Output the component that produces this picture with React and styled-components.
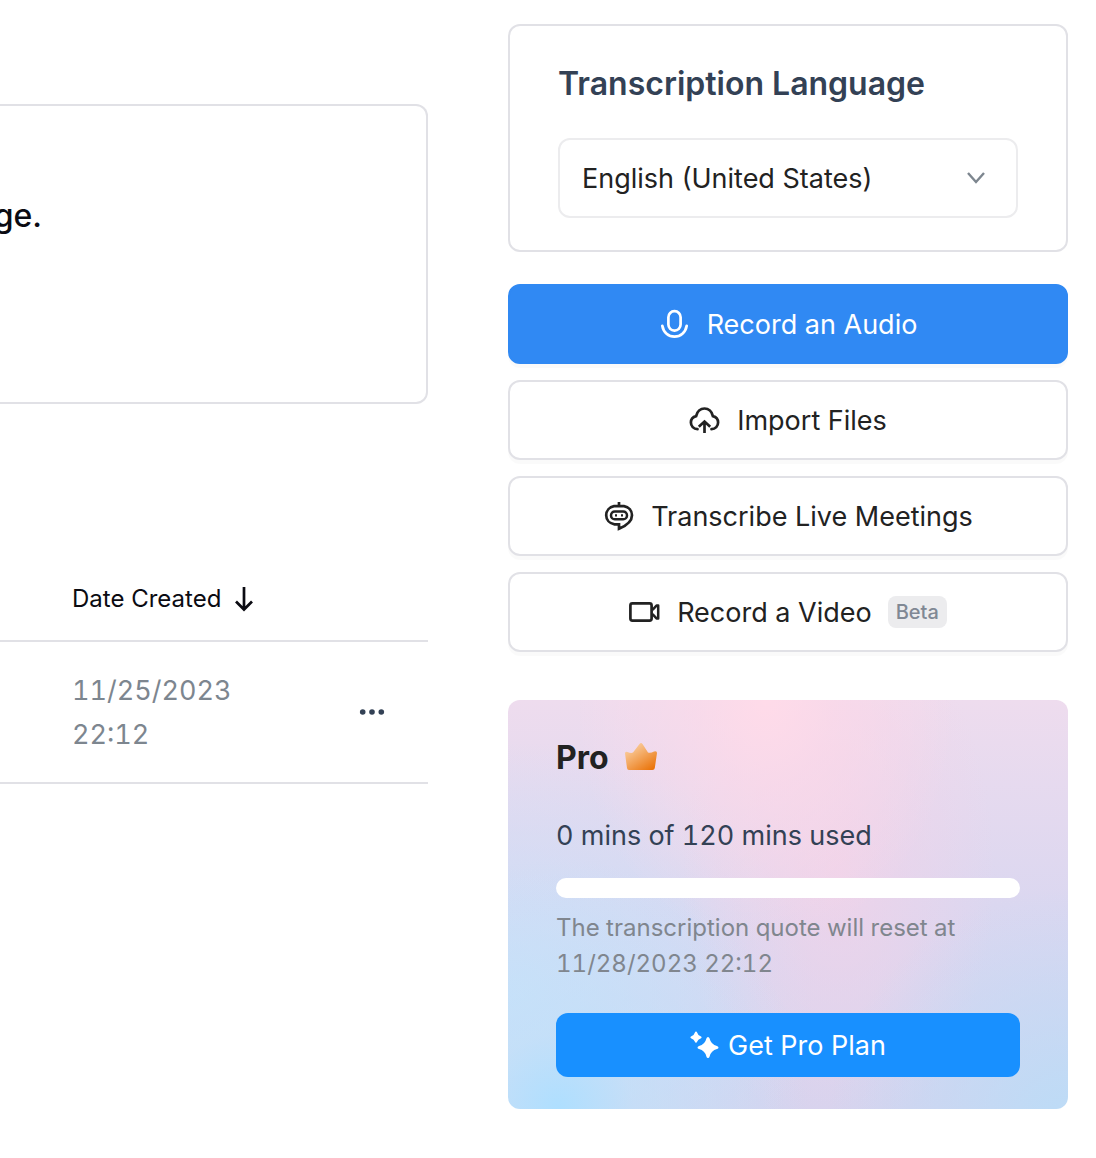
import React from "react";
import styled, { createGlobalStyle } from "styled-components";

const GlobalStyle = createGlobalStyle`
  * {
    box-sizing: border-box;
  }
  body {
    margin: 0;
    background: #ffffff;
    color: #222222;
    font-family: Inter, "Liberation Sans", sans-serif;
    font-size: 27px;
    overflow-x: hidden;
  }
  h2, p {
    margin: 0;
  }
  button, select {
    font-family: inherit;
  }
`;

const Page = styled.div`
  display: grid;
  grid-template-columns: minmax(0, 1fr) 560px;
  column-gap: 80px;
  padding: 24px 28px 48px 0;
`;

const Main = styled.main`
  padding-top: 80px;
`;

const Notice = styled.section`
  height: 300px;
  padding-top: 90px;
  border: 2px solid #e1e1e6;
  border-left: 0;
  border-radius: 0 12px 12px 0;
  overflow: hidden;
`;

const NoticeText = styled.p`
  display: flex;
  justify-content: flex-end;
  width: 42px;
  font-size: 32px;
  font-weight: 500;
  line-height: 40px;
  color: #0b0b12;
`;

const FileTable = styled.table`
  width: 100%;
  margin-top: 151px;
  border-collapse: collapse;
  text-align: left;
`;

const HeadCell = styled.th`
  height: 86px;
  padding: 2px 0 0 72px;
  border-bottom: 2px solid #e1e1e6;
  font-weight: 400;
`;

const SortButton = styled.button`
  display: flex;
  align-items: center;
  gap: 12px;
  padding: 0;
  border: 0;
  background: none;
  font-size: 24px;
  line-height: 32px;
  color: #0b0b12;
`;

const Cell = styled.td`
  height: 142px;
  padding: ${(props) => (props.$end ? "0 40px 0 0" : "2px 0 0 72px")};
  border-bottom: 2px solid #e1e1e6;
  line-height: 44px;
  font-variant-numeric: tabular-nums;
  color: #7d868f;
`;

const MoreButton = styled.button`
  display: flex;
  margin-left: auto;
  padding: 0;
  border: 0;
  background: none;
  color: #334155;
`;

const Sidebar = styled.aside`
  display: flex;
  flex-direction: column;
`;

const LanguageCard = styled.section`
  padding: 36px 48px 32px;
  border: 2px solid #e1e1e6;
  border-radius: 12px;
`;

const LanguageLabel = styled.label`
  display: block;
  margin-bottom: 32px;
  font-size: 32px;
  font-weight: 600;
  line-height: 44px;
  color: #334155;
`;

const SelectBox = styled.div`
  position: relative;
  height: 80px;

  svg {
    position: absolute;
    top: 30px;
    right: 32px;
    pointer-events: none;
  }
`;

const LanguageSelect = styled.select`
  width: 100%;
  height: 100%;
  padding: 0 64px 0 22px;
  appearance: none;
  border: 2px solid #ececee;
  border-radius: 12px;
  background: #ffffff;
  color: #222222;
  font-size: 27px;
`;

const Actions = styled.div`
  display: flex;
  flex-direction: column;
  gap: 16px;
  margin: 32px 0 48px;
`;

const ActionButton = styled.button`
  display: flex;
  align-items: center;
  justify-content: center;
  gap: 16px;
  height: 80px;
  border: 2px solid ${(props) => (props.$primary ? "#3089f3" : "#e1e1e6")};
  border-radius: 12px;
  background: ${(props) => (props.$primary ? "#3089f3" : "#ffffff")};
  color: ${(props) => (props.$primary ? "#ffffff" : "#222222")};
  box-shadow: 0 4px 0 rgba(0, 0, 0, 0.02);
  font-size: 27px;
`;

const Beta = styled.span`
  padding: 0 8px;
  border-radius: 8px;
  background: #ececee;
  color: #808894;
  font-size: 20px;
  font-weight: 500;
  line-height: 32px;
`;

const PlanCard = styled.section`
  padding: 36px 48px 32px;
  border-radius: 12px;
  background:
    radial-gradient(circle 250px at 9% 100%, #aedfff 0, rgba(190, 225, 250, 0.6) 30%, rgba(205, 222, 248, 0) 100%),
    radial-gradient(circle 240px at 100% 105%, #bbdcf7 0, rgba(196, 216, 244, 0) 100%),
    radial-gradient(ellipse 34% 60% at 46% 0, #ffdbe9 0, rgba(255, 217, 232, 0.6) 35%, rgba(255, 215, 232, 0) 100%),
    radial-gradient(ellipse 28% 66% at 59% 42%, rgba(242, 210, 232, 0.8) 0, rgba(234, 208, 230, 0) 100%),
    radial-gradient(ellipse 55% 62% at 0 72%, #cce0f8 0, rgba(214, 222, 246, 0) 100%),
    linear-gradient(180deg, #eedcee 0, #dbd7f0 50%, #d6d3ee 100%);
`;

const PlanTitle = styled.h2`
  display: flex;
  align-items: center;
  gap: 16px;
  font-size: 32px;
  font-weight: 700;
  line-height: 44px;
`;

const Usage = styled.label`
  display: block;
  margin: 34px 0 20px;
  line-height: 44px;
  font-variant-numeric: tabular-nums;
  color: #334155;
`;

const UsageBar = styled.progress`
  display: block;
  width: 100%;
  height: 20px;
  appearance: none;
  border: 0;
  border-radius: 10px;
  background: #ffffff;
  overflow: hidden;

  &::-webkit-progress-bar {
    background: #ffffff;
  }
  &::-webkit-progress-value {
    background: #1890ff;
  }
`;

const ResetNote = styled.p`
  margin: 12px 0 31px;
  font-size: 24px;
  line-height: 36px;
  font-variant-numeric: tabular-nums;
  color: #80868e;
`;

const UpgradeButton = styled.button`
  display: flex;
  align-items: center;
  justify-content: center;
  gap: 8px;
  width: 100%;
  height: 64px;
  border: 0;
  border-radius: 12px;
  background: #1890ff;
  color: #ffffff;
  font-size: 27px;
`;

const Icon = ({ width = 32, height = 32, children }) => (
  <svg
    width={width}
    height={height}
    viewBox={`0 0 ${width} ${height}`}
    fill="none"
    stroke="currentColor"
    strokeWidth="2.7"
    aria-hidden="true"
  >
    {children}
  </svg>
);

const MicIcon = () => (
  <Icon>
    <rect x="9.4" y="3.2" width="12.2" height="19.4" rx="6" />
    <path d="M3.3 17.8C4.4 24.5 9.500 28.600 15.500 28.600S26.600 24.500 27.700 17.800" strokeLinecap="round" />
  </Icon>
);

const CloudIcon = () => (
  <Icon>
    <path
      d="M8.500 25.200C4.500 25.200 1.900 22 1.900 18.600C1.900 15.300 4.100 12.800 7.100 12.100C8.100 7.600 11.500 4.500 15.500 4.500S22.900 7.600 23.900 12.100C26.900 12.800 29.100 15.300 29.100 18.600C29.100 22 26.500 25.200 22.500 25.200"
      strokeLinecap="round"
    />
    <path d="M15.500 29V18M9.800 22.800L15.500 17.500L21.200 22.800" />
  </Icon>
);

const BotIcon = () => (
  <Icon>
    <path d="M16 2V6M11 6.200H21C25.500 7 29 10.500 29 15.200C29 22 22.500 26 16 28.800V24.300H11.500C6.500 23.500 3.200 19.800 3.200 15.200S6.500 7 11 6.200Z" />
    <rect x="8" y="11.600" width="16" height="7.600" rx="3.800" strokeWidth="2.500" />
    <path d="M12 15.400H14M18 15.400H20" strokeWidth="2.200" />
  </Icon>
);

const VideoIcon = () => (
  <Icon>
    <rect x="1.400" y="7.400" width="21.200" height="17.200" rx="2" />
    <path
      d="M23.500 13.800L27.500 9.600H29.200V22.400H27.500L23.500 18.200"
      strokeWidth="2.500"
      strokeLinejoin="round"
    />
  </Icon>
);

const actions = [
  { label: "Record an Audio", icon: MicIcon, primary: true },
  { label: "Import Files", icon: CloudIcon },
  { label: "Transcribe Live Meetings", icon: BotIcon },
  { label: "Record a Video", icon: VideoIcon, beta: true },
];

const App = () => {
  return (
    <>
      <GlobalStyle />
      <Page>
        <Main>
          <Notice>
            <NoticeText>ge.</NoticeText>
          </Notice>
          <FileTable>
            <thead>
              <tr>
                <HeadCell colSpan={2}>
                  <SortButton>
                    Date Created
                    <Icon width={20} height={26}>
                      <path d="M11 1V23M3 15.500L11 23.500L19 15.500" />
                    </Icon>
                  </SortButton>
                </HeadCell>
              </tr>
            </thead>
            <tbody>
              <tr>
                <Cell>
                  11/25/2023
                  <br />
                  22:12
                </Cell>
                <Cell $end>
                  <MoreButton aria-label="More">
                    <Icon width={32} height={8}>
                      <g fill="currentColor" stroke="none">
                        <circle cx="6.700" cy="4" r="2.800" />
                        <circle cx="16" cy="4" r="2.800" />
                        <circle cx="25.300" cy="4" r="2.800" />
                      </g>
                    </Icon>
                  </MoreButton>
                </Cell>
              </tr>
            </tbody>
          </FileTable>
        </Main>
        <Sidebar>
          <LanguageCard>
            <LanguageLabel htmlFor="language">
              Transcription Language
            </LanguageLabel>
            <SelectBox>
              <LanguageSelect id="language">
                <option>English (United States)</option>
              </LanguageSelect>
              <Icon width={20} height={20}>
                <path d="M2 5L10 14L18 5" stroke="#7d868f" strokeWidth="2.400" />
              </Icon>
            </SelectBox>
          </LanguageCard>
          <Actions>
            {actions.map((action) => {
              return (
                <ActionButton key={action.label} $primary={action.primary}>
                  <action.icon />
                  {action.label}
                  {action.beta && <Beta>Beta</Beta>}
                </ActionButton>
              );
            })}
          </Actions>
          <PlanCard>
            <PlanTitle>
              Pro
              <svg width="34" height="32" viewBox="1 1 34 32" aria-hidden="true">
                <defs>
                  <linearGradient id="crown" x1="0.1" y1="0.1" x2="0.8" y2="1">
                    <stop offset="0" stopColor="#fbd3a8" />
                    <stop offset="1" stopColor="#ea750c" />
                  </linearGradient>
                </defs>
                <path
                  d="M1 12.500Q1 10 3.500 11Q7 12.500 9 11.500L15.500 3Q17 1 18.500 3L24 11.500Q26.500 12.500 30 10.500Q33 9.500 33 12L30.800 27Q30.500 29 28.500 29H5Q3.200 29 3 27Z"
                  fill="url(#crown)"
                />
              </svg>
            </PlanTitle>
            <Usage htmlFor="usage">0 mins of 120 mins used</Usage>
            <UsageBar id="usage" value={0} max={120} />
            <ResetNote>
              The transcription quote will reset at 11/28/2023 22:12
            </ResetNote>
            <UpgradeButton>
              <Icon width={30} height={32}>
                <g fill="currentColor" stroke="none">
                  <path d="M18 8Q19.200 8 19.600 9.500Q21 15.500 27 17Q28.500 17.500 28.500 18.500T27 20Q21 21.500 19.600 27.500Q19.200 29 18 29T16.400 27.500Q15 21.500 9 20Q7.500 19.500 7.500 18.500T9 17Q15 15.500 16.400 9.500Q16.800 8 18 8Z" />
                  <path d="M6 2.500Q6.800 2.500 7.100 3.500Q8 6.500 10.600 7.200Q11.600 7.500 11.600 8.300T10.600 9.400Q8 10.100 7.100 12.700Q6.800 13.700 6 13.700T4.900 12.700Q4 10.100 1.400 9.400Q0.400 9.100 0.400 8.300T1.400 7.200Q4 6.500 4.900 3.500Q5.200 2.500 6 2.500Z" />
                </g>
              </Icon>
              Get Pro Plan
            </UpgradeButton>
          </PlanCard>
        </Sidebar>
      </Page>
    </>
  );
};

export default App;
